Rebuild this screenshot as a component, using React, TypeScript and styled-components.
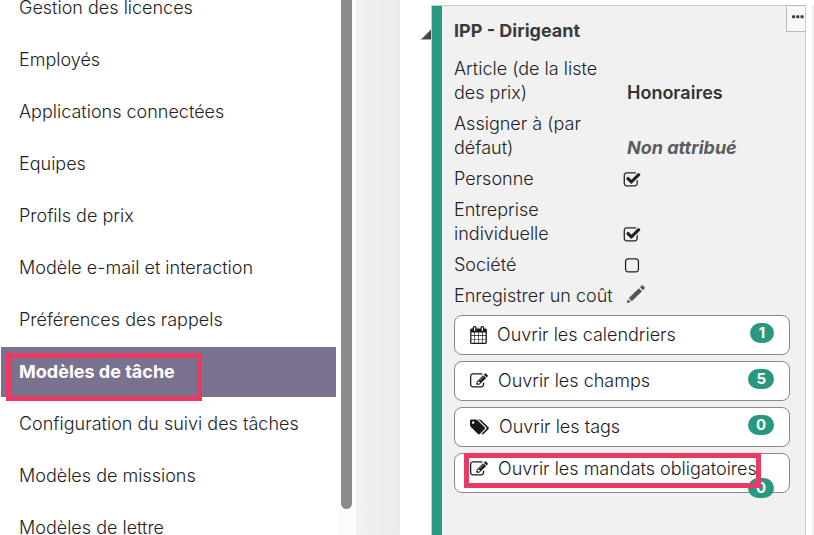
import React from "react";
import styled, { createGlobalStyle, css } from "styled-components";

const GlobalStyle = createGlobalStyle`
  * { box-sizing: border-box; }
  body {
    margin: 0;
    background: #fff;
    color: #222225;
    font-family: Inter, "Open Sans", sans-serif;
    font-size: 18px;
    font-weight: 300;
    line-height: 24px;
  }
  button { font: inherit; color: inherit; cursor: pointer; }
`;

const Page = styled.div`
  display: flex;
  height: 100vh;
  overflow: hidden;
`;

const Sidebar = styled.nav`
  flex: 0 0 337px;
  min-width: 0;
  padding: 0 1px;
  overflow: hidden;
`;

const MenuList = styled.ul`
  display: flex;
  flex-direction: column;
  gap: 2px;
  margin: -17px 0 0;
  padding: 0;
  list-style: none;
`;

const MenuItem = styled.li`
  position: relative;
`;

const MenuLink = styled.a<{ $active: boolean }>`
  display: block;
  padding: 13px 18px;
  color: #222225;
  text-decoration: none;
  white-space: nowrap;
  ${({ $active }) =>
    $active &&
    css`
      background: #7b728f;
      color: #fff;
      font-weight: 700;
    `}
`;

const Highlight = styled.span<{ $area: "menu" | "action" }>`
  position: absolute;
  border: 5px solid #e83a62;
  pointer-events: none;
  ${({ $area }) =>
    $area === "menu"
      ? css`
          top: 6px;
          left: 5px;
          width: 196px;
          height: 48px;
        `
      : css`
          top: -1px;
          left: 9px;
          width: 297px;
          height: 35px;
        `}
`;

const ScrollTrack = styled.div`
  flex: 0 0 19px;
  padding: 0 4px 26px;
  background: #fcfcfc;
`;

const ScrollThumb = styled.div`
  width: 11px;
  height: 100%;
  border-radius: 0 0 6px 6px;
  background: #8b8b8b;
`;

const Gutter = styled.div`
  flex: 0 0 44px;
  background: linear-gradient(to right, #f2f2f2, #ebebeb);
`;

const Main = styled.main`
  display: flex;
  flex: 1;
  min-width: 0;
  padding-top: 5px;
`;

const CollapseButton = styled.button`
  display: flex;
  flex: 0 0 31px;
  align-self: flex-start;
  justify-content: flex-end;
  padding: 24px 0 0;
  border: 0;
  background: none;
`;

const Card = styled.section`
  position: relative;
  display: flex;
  flex: 1;
  flex-direction: column;
  gap: 7px;
  min-width: 0;
  padding: 13px 15px 0 22px;
  border: 1px solid #ccc;
  border-bottom: 0;
  background: #f1f1f1;
  box-shadow: inset 10px 0 #289980;
`;

const NextCard = styled.div`
  flex: 0 0 2px;
  margin-left: 6px;
  background: #f1f1f1;
`;

const CardTitle = styled.h2`
  margin: 0 0 7px;
  color: #3b3b3f;
  font-size: 18px;
  font-weight: 700;
`;

const MoreButton = styled.button`
  position: absolute;
  top: -1px;
  right: -1px;
  display: flex;
  align-items: center;
  width: 20px;
  height: 27px;
  padding: 0 1px 4px 5px;
  border: 1px solid #bbb;
  border-right-color: #ccc;
  background: #f8f8f8;
`;

const Field = styled.div`
  display: grid;
  grid-template-columns: 169px 1fr;
  align-items: end;
`;

const CheckField = styled(Field).attrs({ as: "label" })`
  cursor: pointer;
`;

const FieldValue = styled.span<{ $muted?: boolean }>`
  padding-left: 4px;
  font-weight: ${({ $muted }) => ($muted ? 700 : 600)};
  font-style: ${({ $muted }) => ($muted ? "italic" : "normal")};
  color: ${({ $muted }) => ($muted ? "#5c5c62" : "#333337")};
`;

const CheckMark = styled.span`
  position: relative;
  display: flex;
  align-items: center;
  width: 18px;
  height: 24px;
  padding-top: 2px;
`;

const CheckInput = styled.input`
  position: absolute;
  inset: 0;
  width: 100%;
  height: 100%;
  margin: 0;
  opacity: 0;
`;

const EditButton = styled.button`
  display: flex;
  align-self: start;
  width: 28px;
  padding: 0 3px;
  border: 0;
  background: none;
`;

const Actions = styled.div`
  display: flex;
  flex-direction: column;
  gap: 6px;
`;

const ActionButton = styled.button<{ $crowded: boolean }>`
  position: relative;
  display: flex;
  align-items: ${({ $crowded }) => ($crowded ? "flex-start" : "center")};
  gap: 10px;
  height: 40px;
  padding: ${({ $crowded }) => ($crowded ? "3px" : "0")} 15px 0;
  border: 1px solid #888;
  border-radius: 8px;
  background: #fff;
  color: #1a1a1c;
  text-align: left;
  white-space: nowrap;
`;

const ActionIcon = styled.span`
  display: flex;
  align-items: center;
  height: 24px;
`;

const Badge = styled.span<{ $crowded: boolean }>`
  position: absolute;
  top: ${({ $crowded }) => ($crowded ? 24 : 7)}px;
  right: 15px;
  min-width: 24px;
  padding: 0 8px;
  border-radius: 10px;
  background: #289980;
  color: #fff;
  font-size: 15px;
  font-weight: 700;
  line-height: 20px;
  text-align: center;
`;

const icons = {
  calendar: {
    width: 1664,
    path: "M128 1664h288v-288h-288v288zm352 0h320v-288h-320v288zm-352-352h288v-320h-288v320zm352 0h320v-320h-320v320zm-352-384h288v-288h-288v288zm736 736h320v-288h-320v288zm-384-736h320v-288h-320v288zm768 736h288v-288h-288v288zm-384-352h320v-320h-320v320zm-352-864v-288q0-13-9.5-22.5t-22.5-9.5h-64q-13 0-22.5 9.5t-9.5 22.5v288q0 13 9.5 22.5t22.5 9.5h64q13 0 22.5-9.5t9.5-22.5zm736 864h288v-320h-288v320zm-384-384h320v-288h-320v288zm384 0h288v-288h-288v288zm32-480v-288q0-13-9.5-22.5t-22.5-9.5h-64q-13 0-22.5 9.5t-9.5 22.5v288q0 13 9.5 22.5t22.5 9.5h64q13 0 22.5-9.5t9.5-22.5zm384-64v1280q0 52-38 90t-90 38h-1408q-52 0-90-38t-38-90v-1280q0-52 38-90t90-38h128v-96q0-66 47-113t113-47h64q66 0 113 47t47 113v96h384v-96q0-66 47-113t113-47h64q66 0 113 47t47 113v96h128q52 0 90 38t38 90z",
  },
  edit: {
    width: 1792,
    path: "M888 1184l116-116-152-152-116 116v56h96v96h56zm440-720q-16-16-33 1l-350 350q-17 17-1 33t33-1l350-350q17-17 1-33zm80 594v190q0 119-84.5 203.5t-203.5 84.5h-832q-119 0-203.5-84.5t-84.5-203.5v-832q0-119 84.5-203.5t203.5-84.5h832q63 0 117 25 15 7 18 23 3 17-9 29l-49 49q-14 14-32 8-23-6-45-6h-832q-66 0-113 47t-47 113v832q0 66 47 113t113 47h832q66 0 113-47t47-113v-126q0-13 9-22l64-64q15-15 35-7t20 29zm-96-738l288 288-672 672h-288v-288zm444 132l-92 92-288-288 92-92q28-28 68-28t68 28l152 152q28 28 28 68t-28 68z",
  },
  tags: {
    width: 1920,
    path: "M448 448q0-53-37.5-90.5t-90.5-37.5-90.5 37.5-37.5 90.5 37.5 90.5 90.5 37.5 90.5-37.5 37.5-90.5zm1067 576q0 53-37 90l-491 492q-39 37-91 37-53 0-90-37l-715-716q-38-37-64.5-101t-26.5-117v-416q0-52 38-90t90-38h416q53 0 117 26.5t102 64.5l715 714q37 39 37 91zm384 0q0 53-37 90l-491 492q-39 37-91 37-36 0-59-14t-53-45l470-470q37-37 37-90 0-52-37-91l-715-714q-38-38-102-64.5t-117-26.5h224q53 0 117 26.5t102 64.5l715 714q37 39 37 91z",
  },
  checked: {
    width: 1792,
    path: "M1472 930v318q0 119-84.5 203.5t-203.5 84.5h-832q-119 0-203.5-84.5t-84.5-203.5v-832q0-119 84.5-203.5t203.5-84.5h832q63 0 117 25 15 7 18 23 3 17-9 29l-49 49q-10 10-23 10-3 0-9-2-23-6-45-6h-832q-66 0-113 47t-47 113v832q0 66 47 113t113 47h832q66 0 113-47t47-113v-254q0-13 9-22l64-64q10-10 23-10 6 0 12 3 20 8 20 29zm231-489l-814 814q-24 24-57 24t-57-24l-430-430q-24-24-24-57t24-57l110-110q24-24 57-24t57 24l263 263 647-647q24-24 57-24t57 24l110 110q24 24 24 57t-24 57z",
  },
  unchecked: {
    width: 1792,
    path: "M1312 256h-832q-66 0-113 47t-47 113v832q0 66 47 113t113 47h832q66 0 113-47t47-113v-832q0-66-47-113t-113-47zm288 160v832q0 119-84.5 203.5t-203.5 84.5h-832q-119 0-203.5-84.5t-84.5-203.5v-832q0-119 84.5-203.5t203.5-84.5h832q119 0 203.5 84.5t84.5 203.5z",
  },
};

type IconName = keyof typeof icons;

function Icon({ name }: { name: IconName }) {
  const { width, path } = icons[name];
  return (
    <svg
      width={Math.round((width * 18) / 1792)}
      height="18"
      viewBox={`0 0 ${width} 1792`}
      fill="currentColor"
      aria-hidden="true"
    >
      <path d={path} />
    </svg>
  );
}

function CheckRow({ label, initial }: { label: string; initial: boolean }) {
  const [checked, setChecked] = React.useState(initial);
  return (
    <CheckField>
      <span>{label}</span>
      <CheckMark>
        <CheckInput
          type="checkbox"
          checked={checked}
          onChange={(event) => setChecked(event.target.checked)}
        />
        <Icon name={checked ? "checked" : "unchecked"} />
      </CheckMark>
    </CheckField>
  );
}

const menu = [
  "Gestion des licences",
  "Employés",
  "Applications connectées",
  "Equipes",
  "Profils de prix",
  "Modèle e-mail et interaction",
  "Préférences des rappels",
  "Modèles de tâche",
  "Configuration du suivi des tâches",
  "Modèles de missions",
  "Modèles de lettre",
];
const activeItem = "Modèles de tâche";

const actions: { icon: IconName; label: string; count: number; crowded?: boolean }[] = [
  { icon: "calendar", label: "Ouvrir les calendriers", count: 1 },
  { icon: "edit", label: "Ouvrir les champs", count: 5 },
  { icon: "tags", label: "Ouvrir les tags", count: 0 },
  { icon: "edit", label: "Ouvrir les mandats obligatoires", count: 0, crowded: true },
];

export default function App() {
  return (
    <>
      <GlobalStyle />
      <Page>
        <Sidebar>
          <MenuList>
            {menu.map((item) => (
              <MenuItem key={item}>
                <MenuLink href="#" $active={item === activeItem}>
                  {item}
                </MenuLink>
                {item === activeItem && <Highlight $area="menu" />}
              </MenuItem>
            ))}
          </MenuList>
        </Sidebar>
        <ScrollTrack>
          <ScrollThumb />
        </ScrollTrack>
        <Gutter />
        <Main>
          <CollapseButton aria-label="Réduire">
            <svg width="11" height="11" viewBox="0 0 11 11" aria-hidden="true">
              <path d="M11 0V11H0Z" fill="#aaa" />
              <path d="M11 1V10H2Z" fill="#444" />
            </svg>
          </CollapseButton>
          <Card>
            <MoreButton aria-label="Plus d'options">
              <svg width="13" height="4" viewBox="0 0 13 4" fill="#3b3b3f" aria-hidden="true">
                <rect x="0" width="3.4" height="3.4" rx="1" />
                <rect x="4.6" width="3.4" height="3.4" rx="1" />
                <rect x="9.2" width="3.4" height="3.4" rx="1" />
              </svg>
            </MoreButton>
            <CardTitle>IPP - Dirigeant</CardTitle>
            <Field>
              <span>Article (de la liste des prix)</span>
              <FieldValue>Honoraires</FieldValue>
            </Field>
            <Field>
              <span>Assigner à (par défaut)</span>
              <FieldValue $muted>Non attribué</FieldValue>
            </Field>
            <CheckRow label="Personne" initial />
            <CheckRow label="Entreprise individuelle" initial />
            <CheckRow label="Société" initial={false} />
            <Field>
              <span>Enregistrer un coût</span>
              <EditButton aria-label="Modifier le coût">
                <svg width="20" height="20" viewBox="0 0 20 20" fill="#55565a" aria-hidden="true">
                  <path d="M0.6 19.2L1.9 15.2L4.8 18Z" />
                  <path d="M2.8 14L13 4.2L16 7.2L5.8 17.2Z" />
                  <path d="M14 3.2L15.6 1.6Q16.3 1 17 1.6L18.6 3.2Q19.2 3.9 18.6 4.6L17 6.2Z" />
                </svg>
              </EditButton>
            </Field>
            <Actions>
              {actions.map(({ icon, label, count, crowded = false }) => (
                <ActionButton key={label} $crowded={crowded}>
                  <ActionIcon>
                    <Icon name={icon} />
                  </ActionIcon>
                  {label}
                  <Badge $crowded={crowded}>{count}</Badge>
                  {crowded && <Highlight $area="action" />}
                </ActionButton>
              ))}
            </Actions>
          </Card>
          <NextCard />
        </Main>
      </Page>
    </>
  );
}
